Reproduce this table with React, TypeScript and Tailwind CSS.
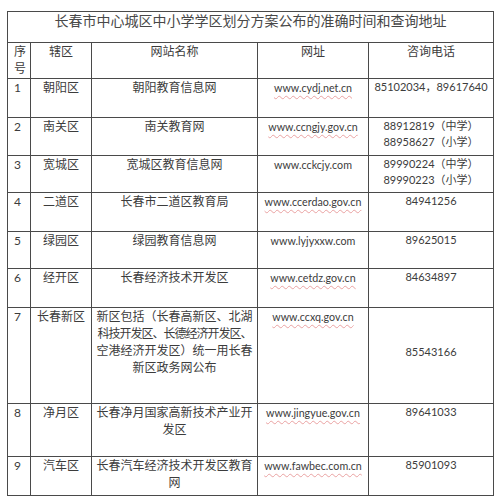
import React from "react";

type Row = {
  n: string;
  d: string;
  name: React.ReactNode;
  url: string;
  wavy: boolean;
  phone: string[];
  phoneCenter?: boolean;
};

const rows: Row[] = [
  { n: "1", d: "朝阳区", name: "朝阳教育信息网", url: "www.cydj.net.cn", wavy: true, phone: ["85102034，89617640"] },
  { n: "2", d: "南关区", name: "南关教育网", url: "www.ccngjy.gov.cn", wavy: true, phone: ["88912819（中学）", "88958627（小学）"] },
  { n: "3", d: "宽城区", name: "宽城区教育信息网", url: "www.cckcjy.com", wavy: false, phone: ["89990224（中学）", "89990223（小学）"] },
  { n: "4", d: "二道区", name: "长春市二道区教育局", url: "www.ccerdao.gov.cn", wavy: true, phone: ["84941256"] },
  { n: "5", d: "绿园区", name: "绿园教育信息网", url: "www.lyjyxxw.com", wavy: false, phone: ["89625015"] },
  { n: "6", d: "经开区", name: "长春经济技术开发区", url: "www.cetdz.gov.cn", wavy: true, phone: ["84634897"] },
  {
    n: "7",
    d: "长春新区",
    name: (
      <>
        <span className="block whitespace-nowrap">新区包括（长春高新区、北湖</span>
        <span className="block whitespace-nowrap tracking-[-1px]">科技开发区、长德经济开发区、</span>
        <span className="block whitespace-nowrap">空港经济开发区）统一用长春</span>
        <span className="block whitespace-nowrap">新区政务网公布</span>
      </>
    ),
    url: "www.ccxq.gov.cn",
    wavy: true,
    phone: ["85543166"],
    phoneCenter: true,
  },
  {
    n: "8",
    d: "净月区",
    name: (
      <>
        <span className="block whitespace-nowrap">长春净月国家高新技术产业开</span>
        <span className="block whitespace-nowrap">发区</span>
      </>
    ),
    url: "www.jingyue.gov.cn",
    wavy: true,
    phone: ["89641033"],
  },
  {
    n: "9",
    d: "汽车区",
    name: (
      <>
        <span className="block whitespace-nowrap">长春汽车经济技术开发区教育</span>
        <span className="block whitespace-nowrap">网</span>
      </>
    ),
    url: "www.fawbec.com.cn",
    wavy: true,
    phone: ["85901093"],
  },
];

export default function App() {
  return (
    <div
      className="w-[500px] h-[502px] bg-white pl-[7px] pt-[11px] text-[#3c3c3c]"
      style={{ fontFamily: 'Lato, "Noto Sans CJK SC", sans-serif' }}
    >
      <div className="grid w-[487px] grid-cols-[22px_60px_165px_110px_124px] grid-rows-[30px_35px_38px_37px_36px_38px_36px_38px_95px_52px_38px] gap-px bg-[#4a4a4a] p-px text-[12px] leading-[17px]">
        <div className="col-span-5 bg-white text-center text-[14px] text-[#484848]">
          长春市中心城区中小学学区划分方案公布的准确时间和查询地址
        </div>
        <div className="bg-white pl-[6px] text-left">
          <span className="block">序</span>
          <span className="block">号</span>
        </div>
        <div className="bg-white text-center">辖区</div>
        <div className="bg-white text-center">网站名称</div>
        <div className="bg-white text-center">网址</div>
        <div className="bg-white text-center">咨询电话</div>
        {rows.map((r) => (
          <React.Fragment key={r.n}>
            <div className="bg-white pl-[6px] text-left">{r.n}</div>
            <div className="bg-white text-center">{r.d}</div>
            <div className="bg-white px-[3px] text-center">{r.name}</div>
            <div className="bg-white text-center text-[10.7px]">
              <span
                className={
                  r.wavy
                    ? "underline decoration-wavy decoration-[#eaa2a2] decoration-1 underline-offset-[3px]"
                    : ""
                }
              >
                {r.url}
              </span>
            </div>
            <div
              className={
                r.phoneCenter
                  ? "bg-white pt-[35px] text-center text-[11px]"
                  : "bg-white text-center text-[11px] leading-[16px]"
              }
            >
              {r.phone.map((p) => (
                <span key={p} className="block whitespace-nowrap">
                  {p}
                </span>
              ))}
            </div>
          </React.Fragment>
        ))}
      </div>
    </div>
  );
}
